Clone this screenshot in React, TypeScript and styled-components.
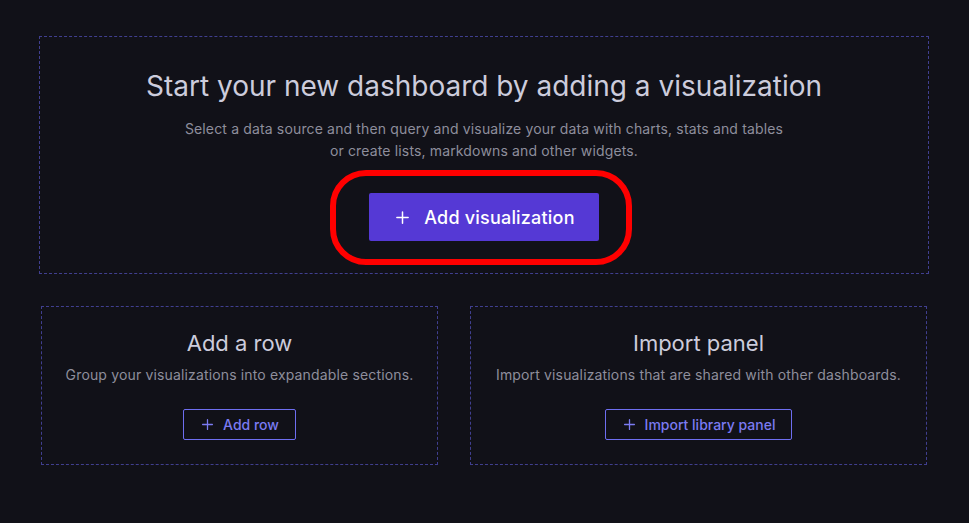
import React from "react";
import styled, { createGlobalStyle } from "styled-components";

const Global = createGlobalStyle`
  html, body { margin: 0; padding: 0; background: #111118; }
  body { font-family: Inter, "Noto Sans", sans-serif; color: #ccccdc; }
  * { box-sizing: border-box; }
`;

const Page = styled.div`
  width: 969px;
  height: 523px;
  padding: 36px 40px 0 39px;
  display: flex;
  flex-direction: column;
  gap: 32px;
  background: #111118;
`;

const Box = styled.div`
  border: 1px dashed #403f8f;
  display: flex;
  flex-direction: column;
  align-items: center;
  text-align: center;
`;

const HeroBox = styled(Box)`
  padding: 31px 24px 32px;
`;

const Row = styled.div`
  display: grid;
  grid-template-columns: 397fr 457fr;
  gap: 32px;
  padding: 0 2px;
`;

const SmallBox = styled(Box)`
  height: 159px;
  padding: 22px 16px 0;
`;

const HeroTitle = styled.h1`
  margin: 0;
  font-size: 28px;
  font-weight: 400;
  line-height: 36px;
  color: #ccccdc;
`;

const HeroText = styled.p`
  margin: 14px 0 0;
  font-size: 14px;
  line-height: 22px;
  letter-spacing: 0.15px;
  color: #8e8e9c;
`;

const CardTitle = styled.h2`
  margin: 0;
  font-size: 22px;
  font-weight: 400;
  line-height: 28px;
  color: #ccccdc;
`;

const CardText = styled.p`
  margin: 7px 0 0;
  font-size: 14px;
  line-height: 22px;
  letter-spacing: 0.15px;
  color: #8e8e9c;
`;

const HeroButtonWrap = styled.div`
  position: relative;
  margin-top: 31px;
`;

const Highlight = styled.div`
  position: absolute;
  left: -39px;
  right: -33px;
  top: -23px;
  bottom: -24px;
  border: 6px solid #ff0000;
  border-radius: 36px;
  pointer-events: none;
`;

const PrimaryButton = styled.button`
  display: flex;
  align-items: center;
  gap: 14px;
  height: 48px;
  padding: 0 24px 0 26px;
  border: none;
  border-radius: 2px;
  background: #5539d5;
  color: #ffffff;
  font-family: inherit;
  font-size: 18px;
  font-weight: 500;
  letter-spacing: 0.2px;
  cursor: pointer;
`;

const OutlineButton = styled.button`
  margin-top: 23px;
  display: flex;
  align-items: center;
  gap: 9px;
  height: 31px;
  padding: 0 16px 0 17px;
  border: 1px solid #6e6ef0;
  border-radius: 2px;
  background: transparent;
  color: #7b7bf2;
  font-family: inherit;
  font-size: 14px;
  font-weight: 500;
  cursor: pointer;
`;

const Plus = ({ size }: { size: number }) => (
  <svg width={size} height={size} viewBox="0 0 16 16" fill="none">
    <path d="M8 2v12M2 8h12" stroke="currentColor" strokeWidth="1.6" strokeLinecap="round" />
  </svg>
);

export default function App() {
  return (
    <>
      <Global />
      <Page>
        <HeroBox>
          <HeroTitle>Start your new dashboard by adding a visualization</HeroTitle>
          <HeroText>
            Select a data source and then query and visualize your data with charts, stats and tables
            <br />
            or create lists, markdowns and other widgets.
          </HeroText>
          <HeroButtonWrap>
            <PrimaryButton>
              <Plus size={15} />
              Add visualization
            </PrimaryButton>
            <Highlight />
          </HeroButtonWrap>
        </HeroBox>
        <Row>
          <SmallBox>
            <CardTitle>Add a row</CardTitle>
            <CardText>Group your visualizations into expandable sections.</CardText>
            <OutlineButton>
              <Plus size={13} />
              Add row
            </OutlineButton>
          </SmallBox>
          <SmallBox>
            <CardTitle>Import panel</CardTitle>
            <CardText>Import visualizations that are shared with other dashboards.</CardText>
            <OutlineButton>
              <Plus size={13} />
              Import library panel
            </OutlineButton>
          </SmallBox>
        </Row>
      </Page>
    </>
  );
}
